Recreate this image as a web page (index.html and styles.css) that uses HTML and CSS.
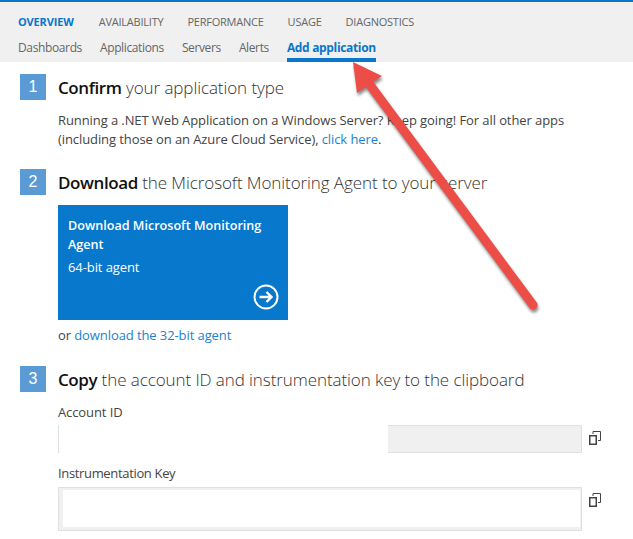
FILE: index.html
```html
<!DOCTYPE html>
<html lang="en">
<head>
<meta charset="utf-8">
<title>Add application</title>
<link rel="stylesheet" href="styles.css">
</head>
<body>
<header class="nav">
  <div class="tabs">
    <span class="tab tab-active">OVERVIEW</span>
    <span class="tab">AVAILABILITY</span>
    <span class="tab">PERFORMANCE</span>
    <span class="tab">USAGE</span>
    <span class="tab">DIAGNOSTICS</span>
  </div>
  <div class="subtabs">
    <span class="sub">Dashboards</span>
    <span class="sub">Applications</span>
    <span class="sub">Servers</span>
    <span class="sub">Alerts</span>
    <span class="sub sub-active">Add application</span>
  </div>
</header>
<main class="main">
  <section class="step step-1">
    <div class="step-head"><span class="badge">1</span><h2 class="title"><b>Confirm</b> your application type</h2></div>
    <p class="para">Running a .NET Web Application on a Windows Server? Keep going! For all other apps<br>(including those on an Azure Cloud Service), <a class="link">click here</a>.</p>
  </section>
  <section class="step step-2">
    <div class="step-head"><span class="badge">2</span><h2 class="title"><b>Download</b> the Microsoft Monitoring Agent to your server</h2></div>
    <div class="card">
      <div class="card-title">Download Microsoft Monitoring Agent</div>
      <div class="card-sub">64-bit agent</div>
      <svg class="card-icon" viewBox="0 0 26 26" width="26" height="26"><circle cx="13" cy="13" r="11.5" fill="none" stroke="#fff" stroke-width="2"/><path d="M6.5 13H18M13.5 8l5 5-5 5" fill="none" stroke="#fff" stroke-width="2.4"/></svg>
    </div>
    <p class="alt">or <a class="link">download the 32-bit agent</a></p>
  </section>
  <section class="step step-3">
    <div class="step-head"><span class="badge">3</span><h2 class="title"><b>Copy</b> the account ID and instrumentation key to the clipboard</h2></div>
    <div class="label label-first">Account ID</div>
    <div class="field-row">
      <div class="field-id"><span class="redact"></span><span class="id-rest"></span></div>
      <svg class="copy" viewBox="0 0 12 14" width="12" height="14"><path d="M4 3V.5h7.5v9H9" fill="none" stroke="#444" stroke-width="1"/><rect x=".75" y="4.75" width="6.5" height="8.5" fill="#fff" stroke="#444" stroke-width="1.5"/></svg>
    </div>
    <div class="label label-second">Instrumentation Key</div>
    <div class="field-row">
      <div class="field-key"></div>
      <svg class="copy" viewBox="0 0 12 14" width="12" height="14"><path d="M4 3V.5h7.5v9H9" fill="none" stroke="#444" stroke-width="1"/><rect x=".75" y="4.75" width="6.5" height="8.5" fill="#fff" stroke="#444" stroke-width="1.5"/></svg>
    </div>
  </section>
</main>
<svg class="arrow" viewBox="0 0 633 539" width="633" height="539">
  <defs><filter id="soft" x="-20%" y="-20%" width="140%" height="140%"><feGaussianBlur stdDeviation="1.6"/></filter></defs>
  <g class="arrow-shadow" filter="url(#soft)" transform="translate(1 3)">
    <path d="M533 305L370 85" fill="none" stroke="#000" stroke-width="9" stroke-linecap="round"/>
    <path d="M353 62L382 76 357 93Z" fill="#000"/>
  </g>
  <path d="M533 305L370 85" fill="none" stroke="#ec4d47" stroke-width="9" stroke-linecap="round"/>
  <path d="M353 62L382 76 357 93Z" fill="#ec4d47"/>
</svg>
</body>
</html>
```
FILE: styles.css
```css
* { box-sizing: border-box; }
html, body { margin: 0; padding: 0; }
body {
  width: 633px;
  height: 539px;
  overflow: hidden;
  position: relative;
  background: #fff;
  color: #333;
  font-family: "Open Sans", "Liberation Sans", sans-serif;
}
.nav {
  height: 62px;
  background: #f0f0f0;
  border-top: 2px solid #0877cd;
  padding-left: 18px;
}
.tabs { display: flex; height: 31px; align-items: center; padding-top: 7px; }
.tab { font-size: 11px; margin-right: 24px; color: #666; letter-spacing: -0.23px; }
.tab-active { color: #0877cd; font-weight: 700; margin-right: 25px; letter-spacing: -0.15px; }
.subtabs { display: flex; height: 29px; gap: 18px; align-items: stretch; }
.sub { font-size: 12px; line-height: 29px; color: #666; letter-spacing: -0.37px; }
.sub-active { color: #0877cd; font-weight: 700; border-bottom: 4px solid #0877cd; letter-spacing: -0.34px; }
.main { padding-left: 20px; }
.step-head { display: flex; align-items: center; gap: 12px; height: 26px; }
.badge {
  width: 26px;
  height: 26px;
  background: #5b9bd5;
  color: #fff;
  font-family: "Liberation Sans", sans-serif;
  font-size: 16px;
  line-height: 26px;
  text-align: center;
}
.title { margin: 0; font-size: 17px; font-weight: 300; color: #333; letter-spacing: -0.08px; white-space: nowrap; }
.title b { font-weight: 600; color: #111; letter-spacing: -0.4px; }
.step-1 { padding-top: 12px; }
.para { margin: 11px 0 0 38px; font-size: 13px; line-height: 19px; color: #444; letter-spacing: -0.09px; white-space: nowrap; }
.link { color: #1a82cf; }
.step-2 { padding-top: 20px; }
.card {
  position: relative;
  margin: 10px 0 0 38px;
  width: 230px;
  height: 115px;
  background: #0878cc;
  color: #fff;
  padding: 11px 10px;
  font-size: 12.6px;
}
.card-title { font-weight: 600; line-height: 19px; }
.card-sub { font-size: 13px; line-height: 19px; margin-top: 4px; letter-spacing: -0.09px; }
.card-icon { position: absolute; right: 9px; bottom: 10px; }
.alt { margin: 6px 0 0 38px; font-size: 13px; line-height: 19px; color: #444; letter-spacing: -0.09px; }
.step-3 { padding-top: 21px; }
.label { margin-left: 38px; font-size: 13px; line-height: 17px; color: #444; letter-spacing: -0.34px; }
.label-first { margin-top: 12px; letter-spacing: -0.1px; }
.label-second { margin-top: 12px; }
.field-row { display: flex; align-items: flex-start; margin: 5px 0 0 38px; }
.label-first + .field-row { margin-top: 4px; }
.field-id { display: flex; width: 524px; height: 28px; }
.redact { width: 330px; border-left: 1px solid #e0e0e0; }
.id-rest { flex: 1; background: #f0f0f0; border: 1px solid #e0e0e0; border-left: 0; }
.field-key { width: 524px; height: 44px; background: #fff; border: 1px solid #e0e0e0; box-shadow: inset 4px 2px 0 0 #f0f0f0, inset -1px -3px 0 0 #f0f0f0; }
.copy { margin: 6px 0 0 7px; flex: none; }
.arrow { position: absolute; left: 0; top: 0; pointer-events: none; }
.arrow-shadow { opacity: 0.45; }
```
